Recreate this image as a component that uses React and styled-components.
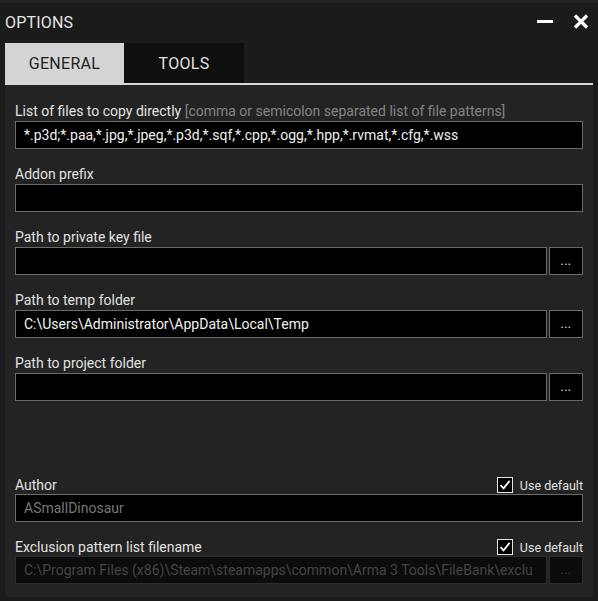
import { createGlobalStyle, styled } from "styled-components";

const GlobalStyle = createGlobalStyle`
  html, body {
    margin: 0;
    padding: 0;
    background: #1b1b1b;
  }
  body {
    font-family: Roboto, "Liberation Sans", sans-serif;
  }
`;

const Window = styled.div`
  width: 598px;
  height: 601px;
  box-sizing: border-box;
  background: #1b1b1b;
  border-top: 3px solid #222;
  display: flex;
  flex-direction: column;
`;

const TitleBar = styled.div`
  height: 37px;
  display: flex;
  align-items: center;
  padding: 0 9px 0 5px;
  box-sizing: border-box;
`;

const Title = styled.div`
  flex: 1;
  color: #e4e4e4;
  font-size: 16px;
  letter-spacing: 0.2px;
  padding-top: 1px;
`;

const WinBtn = styled.button`
  background: none;
  border: none;
  padding: 0;
  margin-left: ${({ $gap }) => $gap || 0}px;
  width: 16px;
  height: 16px;
  display: flex;
  align-items: center;
  justify-content: center;
`;

const MinBar = styled.span`
  width: 16px;
  height: 3px;
  background: #fff;
`;

const Tabs = styled.div`
  display: flex;
  margin: 3px 5px 0;
  border-bottom: 2px solid #d6d6d6;
`;

const Tab = styled.div`
  width: ${({ $w }) => $w}px;
  height: 40px;
  display: flex;
  align-items: center;
  justify-content: center;
  font-size: 16px;
  letter-spacing: 0.3px;
  background: ${({ $active }) => ($active ? "#d4d4d4" : "#0f0f0f")};
  color: ${({ $active }) => ($active ? "#1e1e1e" : "#e2e2e2")};
`;

const Panel = styled.div`
  margin: 0 5px;
  height: 512px;
  background: #232323;
  padding: 17px 10px 0;
  box-sizing: border-box;
  display: flex;
  flex-direction: column;
`;

const Field = styled.div`
  display: flex;
  flex-direction: column;
  margin-bottom: ${({ $mb }) => ($mb === undefined ? 16 : $mb)}px;
`;

const LabelRow = styled.div`
  height: 18px;
  margin-bottom: ${({ $gap }) => ($gap === undefined ? 1 : $gap)}px;
  display: flex;
  align-items: center;
  justify-content: space-between;
`;

const Label = styled.span`
  color: #e2e2e2;
  font-size: 14px;
  white-space: nowrap;
`;

const Hint = styled.span`
  color: #838383;
`;

const InputRow = styled.div`
  display: flex;
  gap: 2px;
`;

const Input = styled.div`
  flex: 1;
  min-width: 0;
  height: 28px;
  box-sizing: border-box;
  background: ${({ $disabled }) => ($disabled ? "#0c0c0c" : "#000")};
  border: 1px solid ${({ $disabled }) => ($disabled ? "#2c2c2c" : "#6b6b6b")};
  padding: 0 8px;
  display: flex;
  align-items: center;
  font-size: 14px;
  color: ${({ $tone }) =>
    $tone === "dim" ? "#444" : $tone === "muted" ? "#777" : "#f0f0f0"};
  white-space: nowrap;
  overflow: hidden;
`;

const Browse = styled.div`
  width: 34px;
  height: 28px;
  box-sizing: border-box;
  background: ${({ $disabled }) => ($disabled ? "#0c0c0c" : "#000")};
  border: 1px solid ${({ $disabled }) => ($disabled ? "#2c2c2c" : "#6b6b6b")};
  color: ${({ $disabled }) => ($disabled ? "#3a3a3a" : "#e8e8e8")};
  display: flex;
  align-items: flex-end;
  justify-content: center;
  font-size: 12px;
  line-height: 1;
  padding-bottom: 7px;
  letter-spacing: 0.5px;
`;

const Spacer = styled.div`
  height: 75px;
`;

const CheckWrap = styled.label`
  display: flex;
  align-items: center;
  gap: 7px;
  color: #e2e2e2;
  font-size: 12.5px;
`;

const CheckBox = styled.span`
  width: 16px;
  height: 16px;
  box-sizing: border-box;
  border: 1px solid #e6e6e6;
  background: #000;
  display: flex;
  align-items: center;
  justify-content: center;
`;

const Check = () => (
  <CheckBox>
    <svg width="12" height="12" viewBox="0 0 12 12">
      <path d="M1.5 6.2 L4.6 9.4 L10.6 1.8" fill="none" stroke="#fff" strokeWidth="1.8" />
    </svg>
  </CheckBox>
);

const UseDefault = () => (
  <CheckWrap>
    <Check />
    Use default
  </CheckWrap>
);

const PathField = ({ label, value, mb }) => (
  <Field $mb={mb}>
    <LabelRow>
      <Label>{label}</Label>
    </LabelRow>
    <InputRow>
      <Input>{value}</Input>
      <Browse>...</Browse>
    </InputRow>
  </Field>
);

export default function App() {
  return (
    <>
      <GlobalStyle />
      <Window>
        <TitleBar>
          <Title>OPTIONS</Title>
          <WinBtn>
            <MinBar />
          </WinBtn>
          <WinBtn $gap={20}>
            <svg width="16" height="15" viewBox="0 0 16 15">
              <path d="M2 1.5 L14 13.5 M14 1.5 L2 13.5" stroke="#fff" strokeWidth="3.2" />
            </svg>
          </WinBtn>
        </TitleBar>
        <Tabs>
          <Tab $active $w={119}>GENERAL</Tab>
          <Tab $w={120}>TOOLS</Tab>
        </Tabs>
        <Panel>
          <Field>
            <LabelRow>
              <Label>
                List of files to copy directly{" "}
                <Hint>[comma or semicolon separated list of file patterns]</Hint>
              </Label>
            </LabelRow>
            <InputRow>
              <Input>*.p3d;*.paa,*.jpg,*.jpeg,*.p3d,*.sqf,*.cpp,*.ogg,*.hpp,*.rvmat,*.cfg,*.wss</Input>
            </InputRow>
          </Field>
          <Field>
            <LabelRow>
              <Label>Addon prefix</Label>
            </LabelRow>
            <InputRow>
              <Input />
            </InputRow>
          </Field>
          <PathField label="Path to private key file" value="" />
          <PathField
            label="Path to temp folder"
            value="C:\Users\Administrator\AppData\Local\Temp"
          />
          <PathField label="Path to project folder" value="" mb={0} />
          <Spacer />
          <Field $mb={16}>
            <LabelRow $gap={0}>
              <Label>Author</Label>
              <UseDefault />
            </LabelRow>
            <InputRow>
              <Input $tone="muted">ASmallDinosaur</Input>
            </InputRow>
          </Field>
          <Field $mb={0}>
            <LabelRow $gap={0}>
              <Label>Exclusion pattern list filename</Label>
              <UseDefault />
            </LabelRow>
            <InputRow>
              <Input $disabled $tone="dim">
                C:\Program Files (x86)\Steam\steamapps\common\Arma 3 Tools\FileBank\exclu
              </Input>
              <Browse $disabled>...</Browse>
            </InputRow>
          </Field>
        </Panel>
      </Window>
    </>
  );
}
